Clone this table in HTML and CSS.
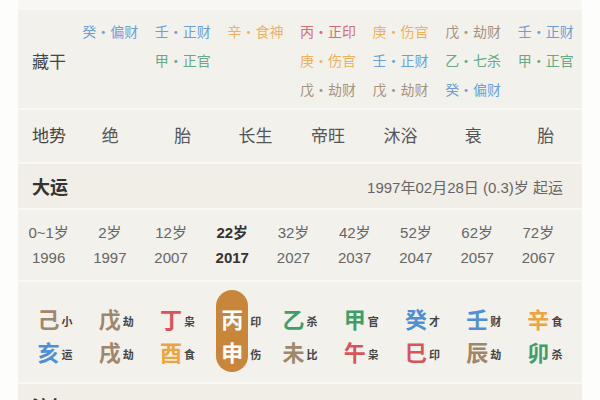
FILE: index.html
```html
<!DOCTYPE html>
<html lang="zh-CN">
<head>
<meta charset="utf-8">
<link rel="stylesheet" href="styles.css">
</head>
<body>
<div class="page">
  <div class="card">
    <div class="strip"></div>

    <div class="row cang">
      <div class="label">藏干</div>
      <div class="cols7">
        <div class="col"><span class="water">癸·偏财</span></div>
        <div class="col"><span class="water">壬·正财</span><span class="wood">甲·正官</span></div>
        <div class="col"><span class="metal">辛·食神</span></div>
        <div class="col"><span class="fire">丙·正印</span><span class="metal">庚·伤官</span><span class="earth">戊·劫财</span></div>
        <div class="col"><span class="metal">庚·伤官</span><span class="water">壬·正财</span><span class="earth">戊·劫财</span></div>
        <div class="col"><span class="earth">戊·劫财</span><span class="wood">乙·七杀</span><span class="water">癸·偏财</span></div>
        <div class="col"><span class="water">壬·正财</span><span class="wood">甲·正官</span></div>
      </div>
    </div>

    <div class="row dishi">
      <div class="label">地势</div>
      <div class="cols7">
        <div class="val">绝</div>
        <div class="val">胎</div>
        <div class="val">长生</div>
        <div class="val">帝旺</div>
        <div class="val">沐浴</div>
        <div class="val">衰</div>
        <div class="val">胎</div>
      </div>
    </div>

    <div class="row header">
      <div class="title">大运</div>
      <div class="info">1997年02月28日 (0.3)岁 起运</div>
    </div>

    <div class="row ages">
      <div class="age"><span>0~1岁</span><span>1996</span></div>
      <div class="age"><span>2岁</span><span>1997</span></div>
      <div class="age"><span>12岁</span><span>2007</span></div>
      <div class="age current"><span>22岁</span><span>2017</span></div>
      <div class="age"><span>32岁</span><span>2027</span></div>
      <div class="age"><span>42岁</span><span>2037</span></div>
      <div class="age"><span>52岁</span><span>2047</span></div>
      <div class="age"><span>62岁</span><span>2057</span></div>
      <div class="age"><span>72岁</span><span>2067</span></div>
    </div>

    <div class="row gz">
      <div class="pair">
        <div class="bigs"><span class="earth">己</span><span class="water">亥</span></div>
        <div class="smalls"><span>小</span><span>运</span></div>
      </div>
      <div class="pair">
        <div class="bigs"><span class="earth">戊</span><span class="earth">戌</span></div>
        <div class="smalls"><span>劫</span><span>劫</span></div>
      </div>
      <div class="pair">
        <div class="bigs"><span class="fire">丁</span><span class="metal">酉</span></div>
        <div class="smalls"><span>枭</span><span>食</span></div>
      </div>
      <div class="pair">
        <div class="bigs pill"><span>丙</span><span>申</span></div>
        <div class="smalls"><span>印</span><span>伤</span></div>
      </div>
      <div class="pair">
        <div class="bigs"><span class="wood">乙</span><span class="earth">未</span></div>
        <div class="smalls"><span>杀</span><span>比</span></div>
      </div>
      <div class="pair">
        <div class="bigs"><span class="wood">甲</span><span class="fire">午</span></div>
        <div class="smalls"><span>官</span><span>枭</span></div>
      </div>
      <div class="pair">
        <div class="bigs"><span class="water">癸</span><span class="fire">巳</span></div>
        <div class="smalls"><span>才</span><span>印</span></div>
      </div>
      <div class="pair">
        <div class="bigs"><span class="water">壬</span><span class="earth">辰</span></div>
        <div class="smalls"><span>财</span><span>劫</span></div>
      </div>
      <div class="pair">
        <div class="bigs"><span class="metal">辛</span><span class="wood">卯</span></div>
        <div class="smalls"><span>食</span><span>杀</span></div>
      </div>
    </div>

    <div class="row header">
      <div class="title">流年</div>
    </div>
  </div>
</div>
</body>
</html>
```

FILE: styles.css
```css
* { box-sizing: border-box; }

html, body {
  margin: 0;
  padding: 0;
  background: #fdfdfc;
}

body {
  font-family: "Liberation Sans", "Noto Sans CJK SC", sans-serif;
  color: #555;
}

.page {
  width: 600px;
  height: 400px;
  overflow: hidden;
  padding: 0 18px;
}

.card {
  background: #f9f8f5;
  display: flex;
  flex-direction: column;
  gap: 2px;
}

.card > .row {
  background: #f3f1ec;
}

.strip {
  height: 8px;
  background: #f8f7f4;
}

.row {
  display: flex;
}

.label {
  width: 56px;
  flex: none;
  padding-left: 14px;
  font-size: 17px;
  color: #444;
  display: flex;
  align-items: center;
  font-family: "Noto Sans CJK SC", sans-serif;
}

.cols7 {
  flex: 1;
  display: grid;
  grid-template-columns: repeat(7, 1fr);
}

/* 藏干 */
.cang {
  height: 98px;
  padding: 7px 0 4px;
}

.cang .col {
  display: flex;
  flex-direction: column;
  align-items: center;
  font-size: 14px;
  line-height: 29px;
  font-family: "Noto Sans CJK SC", sans-serif;
}

.water { color: #4f8fd6; }
.wood { color: #3f9e69; }
.metal { color: #eea33c; }
.fire { color: #d9545a; }
.earth { color: #a0866b; }

.cang .water { color: #6b9fd8; }
.cang .wood { color: #66a986; }
.cang .metal { color: #f0b15e; }
.cang .fire { color: #d86c70; }
.cang .earth { color: #a8937d; }

/* 地势 */
.dishi {
  height: 52px;
  align-items: center;
  padding-bottom: 3px;
}

.dishi .cols7 {
  align-items: center;
}

.dishi .val {
  text-align: center;
  font-size: 17px;
  color: #555;
  font-family: "Noto Sans CJK SC", sans-serif;
}

/* headers */
.header {
  height: 44px;
  flex: none;
  align-items: center;
  justify-content: space-between;
  padding: 0 19px 0 14px;
}

.card > .header {
  background: #f1eee8;
}

.title {
  font-size: 18px;
  font-weight: bold;
  color: #333;
  font-family: "Noto Sans CJK SC", sans-serif;
}

.info {
  font-size: 15px;
  color: #666;
}

/* 大运 ages */
.ages {
  display: grid;
  grid-template-columns: repeat(9, 1fr);
  padding: 10px 13px 9px 0;
  height: 70px;
}

.age {
  display: flex;
  flex-direction: column;
  align-items: center;
  font-size: 15px;
  line-height: 25px;
  color: #666;
}

.age.current {
  color: #333;
  font-weight: bold;
}

/* 干支 */
.gz {
  display: grid;
  grid-template-columns: repeat(9, 1fr);
  padding: 8px 13px 10px 0;
}

.pair {
  display: grid;
  grid-template-columns: 1fr auto 1fr;
  column-gap: 2px;
}

.bigs {
  grid-column: 2;
  display: flex;
  flex-direction: column;
  align-items: center;
  font-family: "Noto Sans CJK SC", sans-serif;
  font-weight: bold;
  font-size: 22px;
  line-height: 33px;
  padding: 12px 0 4px;
}

.bigs.pill {
  background: #c8863a;
  color: #fff;
  border-radius: 16px;
  padding: 12px 5px 4px;
}

.smalls {
  grid-column: 3;
  display: flex;
  flex-direction: column;
  align-items: flex-start;
  font-family: "Noto Sans CJK SC", sans-serif;
  font-weight: bold;
  font-size: 11px;
  line-height: 33px;
  color: #444;
  padding-top: 15px;
}
```
